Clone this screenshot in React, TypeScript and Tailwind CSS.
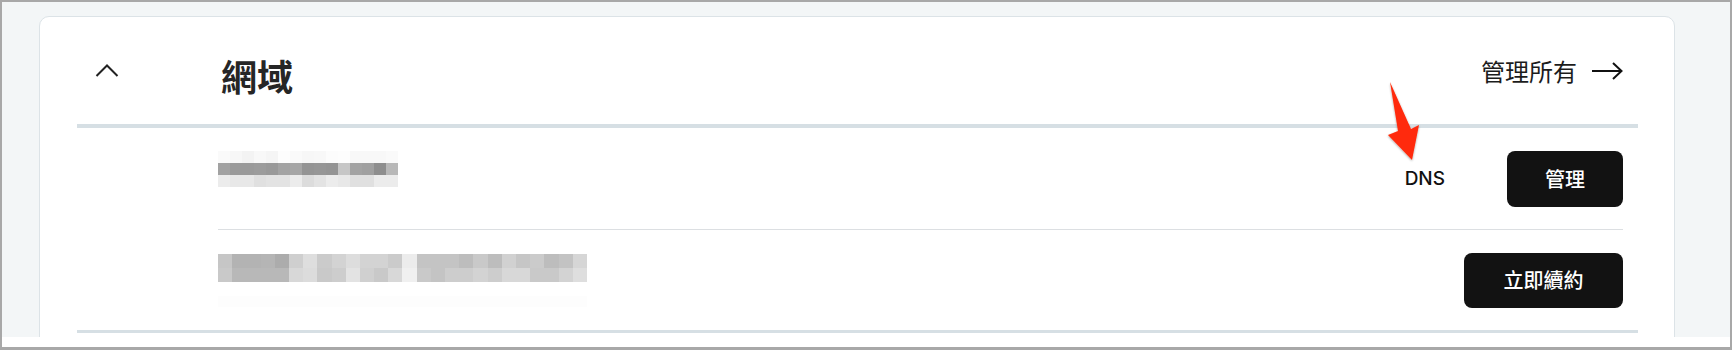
import React from 'react';

const cjk = '"Noto Sans CJK TC", "Noto Sans", sans-serif';

// pixelated redaction, row 1 (15 cols x 3 rows)
const blurA = [
  ['bg-[#fafafa]', 'bg-[#f7f7f7]', 'bg-[#f3f3f3]', 'bg-[#f8f8f8]', 'bg-[#f5f5f5]', 'bg-[#fdfdfd]', 'bg-[#fafafa]', 'bg-[#f7f7f7]', 'bg-[#f8f8f8]', 'bg-[#fcfcfc]', 'bg-[#fdfdfd]', 'bg-[#f8f8f8]', 'bg-[#f8f8f8]', 'bg-[#f8f8f8]', 'bg-[#fafafa]'],
  ['bg-[#a2a2a2]', 'bg-[#9a9a9a]', 'bg-[#9a9a9a]', 'bg-[#9c9c9c]', 'bg-[#999999]', 'bg-[#a3a3a3]', 'bg-[#a6a6a6]', 'bg-[#949494]', 'bg-[#969696]', 'bg-[#949494]', 'bg-[#c6c6c6]', 'bg-[#a3a3a3]', 'bg-[#a0a0a0]', 'bg-[#8e8e8e]', 'bg-[#b8b8b8]'],
  ['bg-[#ececec]', 'bg-[#e8e8e8]', 'bg-[#e8e8e8]', 'bg-[#e0e0e0]', 'bg-[#e3e3e3]', 'bg-[#e3e3e3]', 'bg-[#ececec]', 'bg-[#dcdcdc]', 'bg-[#e3e3e3]', 'bg-[#ececec]', 'bg-[#e8e8e8]', 'bg-[#e0e0e0]', 'bg-[#e0e0e0]', 'bg-[#ececec]', 'bg-[#ececec]'],
];

// row 2 (26 cols x 2 rows)
const blurB = [
  ['bg-[#c6c6c6]', 'bg-[#b3b3b3]', 'bg-[#b3b3b3]', 'bg-[#b5b5b5]', 'bg-[#acacac]', 'bg-[#cfcfcf]', 'bg-[#dedede]', 'bg-[#cbcbcb]', 'bg-[#d3d3d3]', 'bg-[#dddddd]', 'bg-[#d3d3d3]', 'bg-[#d3d3d3]', 'bg-[#cbcbcb]', 'bg-[#ececec]', 'bg-[#c4c4c4]', 'bg-[#c4c4c4]', 'bg-[#c4c4c4]', 'bg-[#bdbdbd]', 'bg-[#c9c9c9]', 'bg-[#bdbdbd]', 'bg-[#d1d1d1]', 'bg-[#c6c6c6]', 'bg-[#cbcbcb]', 'bg-[#bdbdbd]', 'bg-[#c3c3c3]', 'bg-[#d6d6d6]'],
  ['bg-[#c9c9c9]', 'bg-[#b8b8b8]', 'bg-[#b8b8b8]', 'bg-[#b8b8b8]', 'bg-[#b8b8b8]', 'bg-[#d8d8d8]', 'bg-[#dcdcdc]', 'bg-[#c9c9c9]', 'bg-[#cdcdcd]', 'bg-[#e3e3e3]', 'bg-[#d0d0d0]', 'bg-[#c9c9c9]', 'bg-[#d8d8d8]', 'bg-[#f0f0f0]', 'bg-[#c9c9c9]', 'bg-[#c4c4c4]', 'bg-[#cdcdcd]', 'bg-[#cdcdcd]', 'bg-[#d3d3d3]', 'bg-[#cdcdcd]', 'bg-[#d8d8d8]', 'bg-[#d8d8d8]', 'bg-[#c9c9c9]', 'bg-[#c9c9c9]', 'bg-[#d3d3d3]', 'bg-[#dedede]'],
];

function Pixels({ rows, cell, h }: { rows: string[][]; cell: string; h: string }) {
  return (
    <div className="flex flex-col">
      {rows.map((r, i) => (
        <div key={i} className={`flex ${h}`}>
          {r.map((c, j) => (
            <div key={j} className={`${cell} ${c}`} />
          ))}
        </div>
      ))}
    </div>
  );
}

export default function App() {
  return (
    <div className="relative w-[1732px] h-[350px] overflow-hidden bg-white border-2 border-b-[3px] border-[#a8a8a8]">
      <div className="h-[335px] overflow-hidden bg-[#f3f6f7] pl-[37px] pr-[55px] pt-[14px]">
        <div className="h-[400px] rounded-t-[10px] border border-[#dce3e7] bg-white pl-[37px] pr-[36px]">
          {/* header */}
          <div className="flex h-[107px] items-center pr-[15px]">
            <svg width="24" height="13" viewBox="0 0 24 13" className="ml-[18px]">
              <polyline points="1.5,12 12,1.5 22.5,12" fill="none" stroke="#222" strokeWidth="2" />
            </svg>
            <h2
              className="ml-[102px] mt-[8px] text-[36px] font-semibold leading-none text-[#262626]"
              style={{ fontFamily: cjk }}
            >
              網域
            </h2>
            <div className="ml-auto flex items-center gap-[15px]">
              <span className="text-[24px] leading-none text-[#1c1c1c]" style={{ fontFamily: cjk }}>
                管理所有
              </span>
              <svg width="31" height="18" viewBox="0 0 31 18">
                <line x1="0" y1="9" x2="29" y2="9" stroke="#111" strokeWidth="2" />
                <polyline points="21,1 29.5,9 21,17" fill="none" stroke="#111" strokeWidth="2" />
              </svg>
            </div>
          </div>
          <div className="h-[4px] bg-[#d6dfe4]" />

          {/* rows */}
          <div className="ml-[141px] mr-[15px]">
            <div className="flex h-[102px] items-center border-b border-[#dcdfe2]">
              <div className="mb-[20px]">
                <Pixels rows={blurA} cell="w-[12px]" h="h-[12px]" />
              </div>
              <span
                className="ml-auto text-[19px] font-medium leading-none text-[#111]"
                style={{ fontFamily: 'Inter, "Noto Sans", sans-serif' }}
              >
                DNS
              </span>
              <button
                className="ml-[62px] flex h-[56px] w-[116px] items-center justify-center rounded-[8px] bg-[#121212] text-[20px] font-medium text-white"
                style={{ fontFamily: cjk }}
              >
                管理
              </button>
            </div>
            <div className="flex h-[100px] items-center">
              <div className="flex flex-col">
                <Pixels rows={blurB} cell="w-[14.2px]" h="h-[14px]" />
                <div className="mt-[14px] h-[11px] w-[369px] bg-[#fdfdfd]" />
              </div>
              <button
                className="ml-auto flex h-[55px] w-[159px] items-center justify-center rounded-[8px] bg-[#121212] text-[20px] font-medium text-white"
                style={{ fontFamily: cjk }}
              >
                立即續約
              </button>
            </div>
          </div>
          <div className="h-[3px] bg-[#d6dfe4]" />
        </div>
      </div>

      {/* red annotation arrow */}
      <svg
        className="pointer-events-none absolute -left-[2px] -top-[2px]"
        width="1732"
        height="350"
        viewBox="0 0 1732 350"
      >
        <defs>
          <filter id="sh" x="-50%" y="-50%" width="200%" height="200%">
            <feDropShadow dx="0" dy="1" stdDeviation="1.2" floodColor="#000" floodOpacity="0.35" />
          </filter>
        </defs>
        <polygon
          points="1390,82 1411,129 1419,125 1412,160 1388,135 1398,131"
          fill="#ff2a0a"
          filter="url(#sh)"
        />
      </svg>
    </div>
  );
}
